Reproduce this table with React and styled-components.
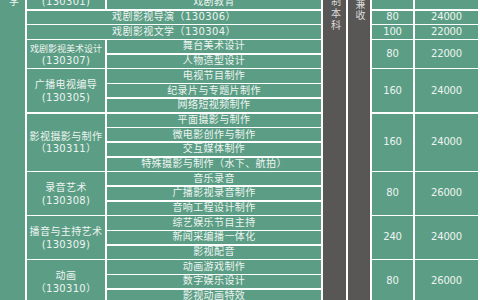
import React from "react";
import styled, { createGlobalStyle } from "styled-components";

const GlobalStyle = createGlobalStyle`
  html, body {
    margin: 0;
    padding: 0;
    background: #ffffff;
  }
  body {
    width: 480px;
    height: 300px;
    overflow: hidden;
    font-family: "DejaVu Sans", "Noto Sans CJK SC", sans-serif;
  }
`;

const colors = {
  green: "#5b9e85",
  dark: "#595656",
  text: "#eef4f1",
  darkText: "#dcdcdc",
  line: "#ffffff",
};

// the page shows the table scrolled a little: its first row sits above the top edge
const Table = styled.div`
  display: grid;
  width: 478px;
  margin-top: -33.35px;
  grid-template-columns: 25px 78px 214px 23px 22px 41px 63px;
  grid-template-rows: repeat(23, 13.2px);
  column-gap: 2px;
  row-gap: 1.5px;
  background: ${colors.line};
`;

const Cell = styled.div`
  grid-column: ${(p) => p.$col};
  grid-row: ${(p) => p.$row} / span ${(p) => p.$span || 1};
  display: flex;
  flex-direction: column;
  align-items: center;
  justify-content: center;
  background: ${colors.green};
  color: ${colors.text};
  font-size: 10px;
  line-height: 12.5px;
  letter-spacing: 0.4px;
  white-space: nowrap;
  text-align: center;
  overflow: hidden;
`;

const MajorCell = styled(Cell)`
  padding-top: ${(p) => (p.$stacked ? "2px" : "0")};
`;

const MajorName = styled.span`
  font-size: ${(p) => (p.$tight ? "9px" : "10px")};
  letter-spacing: ${(p) => (p.$tight ? "0" : "0.4px")};
`;

const MajorCode = styled.span`
  letter-spacing: 0.3px;
`;

const NumCell = styled(Cell)`
  letter-spacing: -0.2px;
`;

const SideCell = styled.div`
  grid-column: ${(p) => p.$col};
  grid-row: 1 / -1;
  display: flex;
  justify-content: center;
  padding-top: ${(p) => p.$pad}px;
  background: ${(p) => (p.$dark ? colors.dark : colors.green)};
  color: ${(p) => (p.$dark ? colors.darkText : colors.text)};
  font-size: 10px;
  overflow: hidden;
`;

const VerticalText = styled.span`
  writing-mode: vertical-rl;
  text-orientation: upright;
  letter-spacing: ${(p) => p.$gap || 2}px;
  line-height: 12px;
`;

const groups = [
  { major: "音乐表演（130201）", count: 60, fee: 24000 },
  {
    major: "表演",
    code: "(130301)",
    items: ["戏剧影视表演", "戏剧教育"],
    count: 120,
    fee: 24000,
  },
  { major: "戏剧影视导演（130306）", count: 80, fee: 24000 },
  { major: "戏剧影视文学（130304）", count: 100, fee: 22000 },
  {
    major: "戏剧影视美术设计",
    code: "(130307)",
    tight: true,
    items: ["舞台美术设计", "人物造型设计"],
    count: 80,
    fee: 22000,
  },
  {
    major: "广播电视编导",
    code: "(130305)",
    items: ["电视节目制作", "纪录片与专题片制作", "网络短视频制作"],
    count: 160,
    fee: 24000,
  },
  {
    major: "影视摄影与制作",
    code: "（130311）",
    items: [
      "平面摄影与制作",
      "微电影创作与制作",
      "交互媒体制作",
      "特殊摄影与制作（水下、航拍）",
    ],
    count: 160,
    fee: 24000,
  },
  {
    major: "录音艺术",
    code: "(130308)",
    items: ["音乐录音", "广播影视录音制作", "音响工程设计制作"],
    count: 80,
    fee: 26000,
  },
  {
    major: "播音与主持艺术",
    code: "(130309)",
    items: ["综艺娱乐节目主持", "新闻采编播一体化", "影视配音"],
    count: 240,
    fee: 24000,
  },
  {
    major: "动画",
    code: "（130310）",
    items: ["动画游戏制作", "数字娱乐设计", "影视动画特效"],
    count: 80,
    fee: 26000,
  },
];

const placeRows = (list) => {
  let row = 1;
  return list.map((g) => {
    const span = g.items ? g.items.length : 1;
    const placed = { ...g, row, span };
    row += span;
    return placed;
  });
};

const MajorGroup = ({ group }) => {
  const { major, code, tight, items, count, fee, row, span } = group;
  return (
    <>
      {items ? (
        <>
          <MajorCell $col={2} $row={row} $span={span} $stacked>
            <MajorName $tight={tight}>{major}</MajorName>
            <MajorCode>{code}</MajorCode>
          </MajorCell>
          {items.map((item, i) => (
            <Cell key={item} $col={3} $row={row + i}>
              {item}
            </Cell>
          ))}
        </>
      ) : (
        <MajorCell $col="2 / span 2" $row={row}>
          {major}
        </MajorCell>
      )}
      <NumCell $col={6} $row={row} $span={span}>
        {count}
      </NumCell>
      <NumCell $col={7} $row={row} $span={span}>
        {fee}
      </NumCell>
    </>
  );
};

const App = () => {
  const rows = placeRows(groups);
  return (
    <>
      <GlobalStyle />
      <Table>
        <SideCell $col={1} $pad={5}>
          <VerticalText>艺术学</VerticalText>
        </SideCell>
        <SideCell $col={4} $pad={5} $dark>
          <VerticalText>全日制本科</VerticalText>
        </SideCell>
        <SideCell $col={5} $pad={9} $dark>
          <VerticalText $gap={1.5}>文理兼收</VerticalText>
        </SideCell>
        {rows.map((g) => (
          <MajorGroup key={g.major} group={g} />
        ))}
      </Table>
    </>
  );
};

export default App;
